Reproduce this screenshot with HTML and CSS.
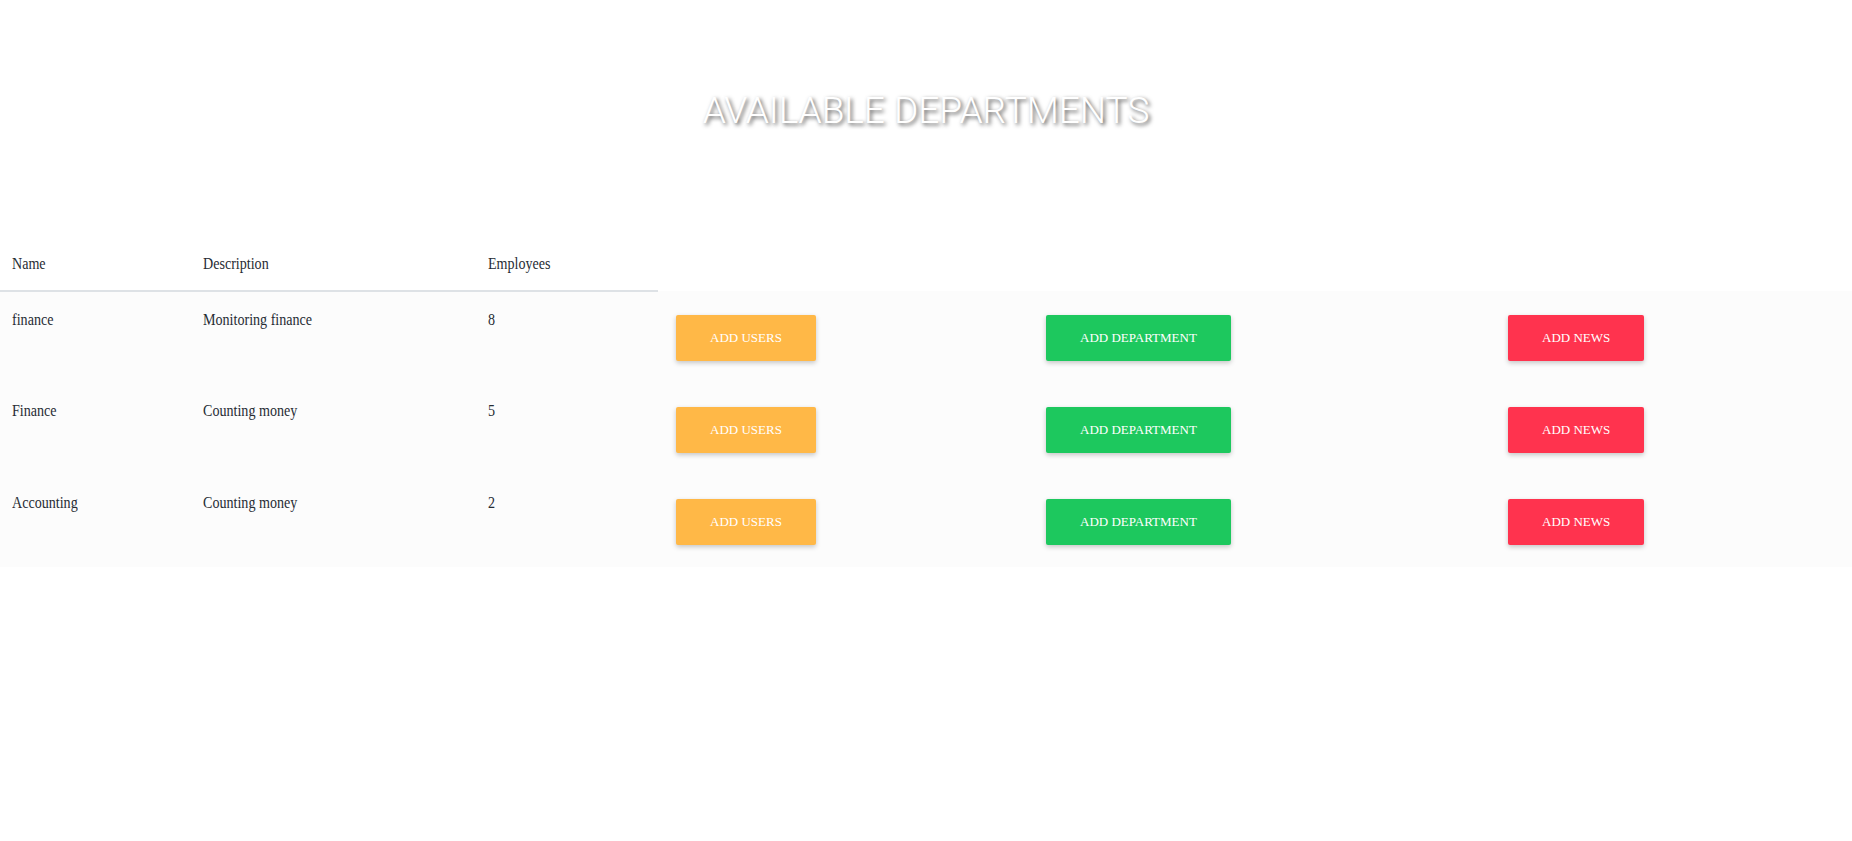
FILE: index.html
```html
<!DOCTYPE html>
<html>
<head>
<meta charset="utf-8">
<title>Departments</title>
<link rel="stylesheet" href="styles.css">
</head>
<body>
<header class="page-head">
  <h1 class="title">AVAILABLE DEPARTMENTS</h1>
</header>
<table class="dept-table">
  <colgroup>
    <col class="c-name"><col class="c-desc"><col class="c-emp"><col class="c-b1"><col class="c-b2"><col class="c-b3">
  </colgroup>
  <thead>
    <tr>
      <th><span class="txt">Name</span></th>
      <th><span class="txt">Description</span></th>
      <th><span class="txt">Employees</span></th>
      <td class="blank"></td><td class="blank"></td><td class="blank"></td>
    </tr>
  </thead>
  <tbody>
    <tr>
      <td class="cell-text"><span class="txt">finance</span></td>
      <td class="cell-text"><span class="txt">Monitoring finance</span></td>
      <td class="cell-text"><span class="txt">8</span></td>
      <td><button class="btn btn-orange">ADD USERS</button></td>
      <td><button class="btn btn-green">ADD DEPARTMENT</button></td>
      <td><button class="btn btn-red">ADD NEWS</button></td>
    </tr>
    <tr>
      <td class="cell-text"><span class="txt">Finance</span></td>
      <td class="cell-text"><span class="txt">Counting money</span></td>
      <td class="cell-text"><span class="txt">5</span></td>
      <td><button class="btn btn-orange">ADD USERS</button></td>
      <td><button class="btn btn-green">ADD DEPARTMENT</button></td>
      <td><button class="btn btn-red">ADD NEWS</button></td>
    </tr>
    <tr>
      <td class="cell-text"><span class="txt">Accounting</span></td>
      <td class="cell-text"><span class="txt">Counting money</span></td>
      <td class="cell-text"><span class="txt">2</span></td>
      <td><button class="btn btn-orange">ADD USERS</button></td>
      <td><button class="btn btn-green">ADD DEPARTMENT</button></td>
      <td><button class="btn btn-red">ADD NEWS</button></td>
    </tr>
  </tbody>
</table>
</body>
</html>
```
FILE: styles.css
```css
html, body {
  margin: 0;
  padding: 0;
  background: #ffffff;
}
body {
  font-family: "Liberation Serif", serif;
  font-size: 16px;
  color: #262b33;
}
.page-head {
  padding-top: 89px;
  height: 240px;
  box-sizing: border-box;
}
.title {
  margin: 0;
  text-align: center;
  font-family: Roboto, "Liberation Sans", sans-serif;
  font-weight: 300;
  font-size: 37px;
  line-height: 43px;
  color: #ffffff;
  text-shadow: 2px 2px 4px rgba(0, 0, 0, 0.7);
}
.dept-table {
  width: 100%;
  border-collapse: collapse;
  table-layout: fixed;
}
.c-name { width: 191px; }
.c-desc { width: 285px; }
.c-emp { width: 182px; }
.c-b1 { width: 370px; }
.c-b2 { width: 462px; }
.c-b3 { width: 362px; }
.dept-table th {
  text-align: left;
  font-weight: normal;
  padding: 12px 12px 14px;
  line-height: 24px;
  vertical-align: bottom;
  border-bottom: 2px solid #dee2e6;
}
.dept-table td {
  padding: 12px;
  line-height: 24px;
  vertical-align: top;
}
.dept-table td.cell-text {
  padding-top: 16px;
}
.dept-table thead .blank {
  padding: 0;
}
.dept-table tbody tr {
  background: #fcfcfc;
  height: 92px;
}
.txt {
  display: inline-block;
  transform: scaleX(0.88);
  transform-origin: left center;
  white-space: nowrap;
}
.btn {
  display: inline-block;
  margin: 12px 6px 10px;
  height: 46px;
  padding: 0 34px;
  border: none;
  border-radius: 2px;
  font-family: "Liberation Serif", serif;
  font-size: 13px;
  color: #ffffff;
  box-shadow: 0 2px 5px rgba(0, 0, 0, 0.22);
  cursor: pointer;
  vertical-align: top;
}
.btn-orange { background: #ffb847; }
.btn-green { background: #1dc85e; }
.btn-red { background: #ff334e; }
```
